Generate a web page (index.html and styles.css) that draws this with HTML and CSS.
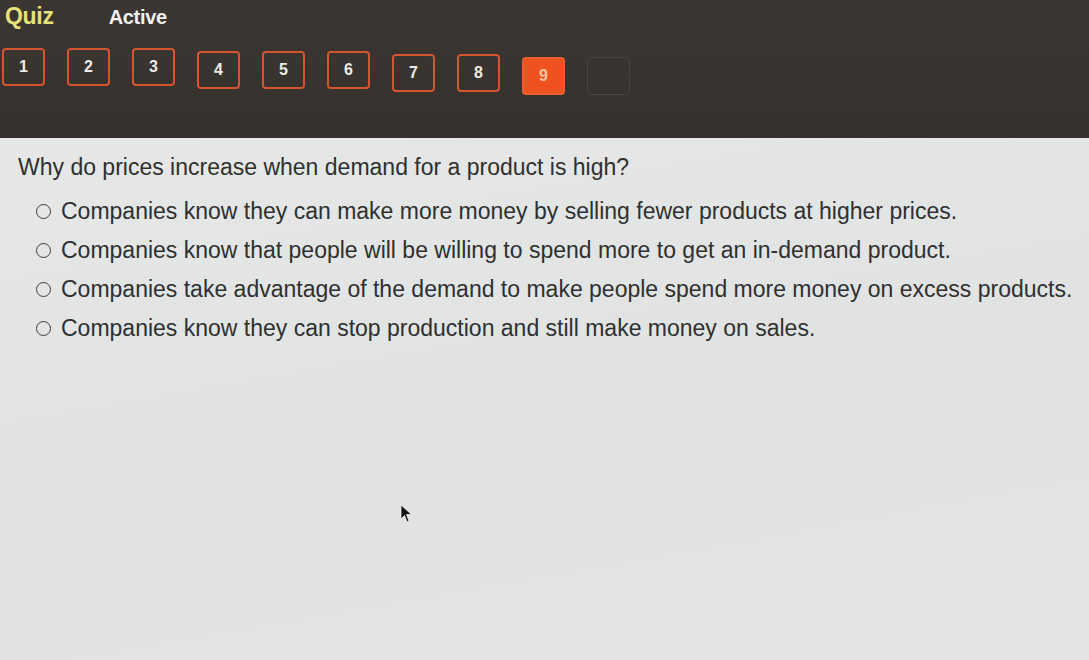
FILE: index.html
```html
<!DOCTYPE html>
<html>
<head>
<meta charset="utf-8">
<link rel="stylesheet" href="styles.css">
</head>
<body>
<div class="page">
  <header class="top">
    <div class="titles">
      <span class="quiz">Quiz</span>
      <span class="status">Active</span>
    </div>
    <nav class="nums">
      <span class="num">1</span>
      <span class="num">2</span>
      <span class="num">3</span>
      <span class="num">4</span>
      <span class="num">5</span>
      <span class="num">6</span>
      <span class="num">7</span>
      <span class="num">8</span>
      <span class="num current">9</span>
      <span class="num empty"></span>
    </nav>
  </header>
  <main class="content">
    <p class="question">Why do prices increase when demand for a product is high?</p>
    <ul class="options">
      <li class="option"><span class="radio"></span>Companies know they can make more money by selling fewer products at higher prices.</li>
      <li class="option"><span class="radio"></span>Companies know that people will be willing to spend more to get an in-demand product.</li>
      <li class="option"><span class="radio"></span>Companies take advantage of the demand to make people spend more money on excess products.</li>
      <li class="option"><span class="radio"></span>Companies know they can stop production and still make money on sales.</li>
    </ul>
    <svg class="cursor" width="14" height="20" viewBox="0 0 14 20"><path d="M1 1 L1 15 L4.5 11.5 L7 18 L9 17 L6.5 10.5 L11.5 10.5 Z" fill="#111" stroke="#eee" stroke-width="0.8"/></svg>
  </main>
</div>
</body>
</html>
```

FILE: styles.css
```css
html, body {
  margin: 0;
  padding: 0;
}
body {
  width: 1089px;
  height: 660px;
  overflow: hidden;
  font-family: "Liberation Sans", Arial, sans-serif;
  background: #e3e5e4;
}
.page {
  display: flex;
  flex-direction: column;
  height: 660px;
}
.top {
  background: linear-gradient(180deg, #3b3632 0%, #36312d 100%);
  height: 138px;
  box-sizing: border-box;
  padding: 0 0 0 5px;
  display: flex;
  flex-direction: column;
}
.titles {
  display: flex;
  align-items: baseline;
  gap: 55px;
  height: 42px;
}
.quiz {
  color: #e6e27a;
  font-weight: bold;
  font-size: 23px;
  letter-spacing: -0.3px;
}
.status {
  color: #f2f2f0;
  font-weight: bold;
  font-size: 20px;
  letter-spacing: -0.3px;
  margin-top: 6px;
}
.nums {
  display: flex;
  gap: 22px;
  margin-top: 6px;
  margin-left: -3px;
}
.num {
  width: 43px;
  height: 38px;
  box-sizing: border-box;
  border: 2.5px solid #d4552f;
  border-radius: 4px;
  display: flex;
  align-items: center;
  justify-content: center;
  color: #ecebe6;
  font-weight: bold;
  font-size: 16px;
}
.num:nth-child(n+4) { margin-top: 3px; }
.num:nth-child(n+7) { margin-top: 6px; }
.num.current {
  background: #f0521f;
  border-color: #e8602e;
  color: #f6c6a0;
  margin-top: 9px;
}
.num.empty {
  border: 1.5px solid #4a4542;
  margin-top: 9px;
}
.content {
  flex: 1;
  position: relative;
  padding: 12px 0 0 18px;
  background: linear-gradient(170deg, #e6e8e7 0%, #e0e3e2 50%, #e4e5e4 100%);
  color: #2f3030;
}
.question {
  margin: 4px 0 18px 0;
  font-size: 23px;
  line-height: 26px;
}
.options {
  list-style: none;
  margin: 0;
  padding: 0 0 0 18px;
  display: flex;
  flex-direction: column;
  gap: 13px;
}
.option {
  display: flex;
  align-items: center;
  font-size: 23px;
  line-height: 26px;
}
.radio {
  width: 15px;
  height: 15px;
  box-sizing: border-box;
  border: 1.8px solid #3a3a3a;
  border-radius: 50%;
  margin-right: 10px;
  flex: none;
}
.cursor {
  position: absolute;
  left: 400px;
  top: 366px;
}
```
